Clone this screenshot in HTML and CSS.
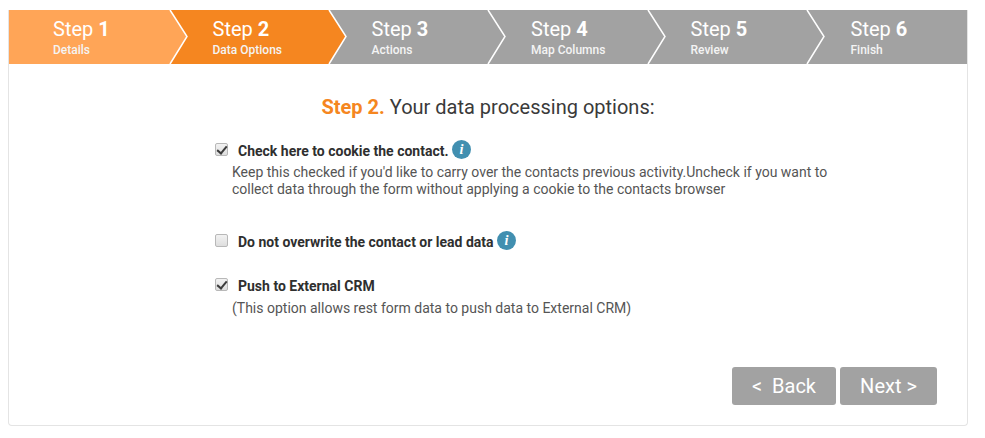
FILE: index.html
```html
<!DOCTYPE html>
<html lang="en">
<head>
<meta charset="utf-8">
<title>Step 2</title>
<link rel="stylesheet" href="styles.css">
</head>
<body>
<div class="panel">
  <ol class="steps">
    <li class="step done"><span class="step-title">Step <b>1</b></span><span class="step-sub">Details</span>
      <svg class="chev" viewBox="0 0 18 54"><polygon class="chev-fill" points="0,0 17,26.500 0,54"/><polyline class="chev-line" points="0,0 17,26.500 0,54"/></svg></li>
    <li class="step active"><span class="step-title">Step <b>2</b></span><span class="step-sub">Data Options</span>
      <svg class="chev" viewBox="0 0 18 54"><polygon class="chev-fill" points="0,0 17,26.500 0,54"/><polyline class="chev-line" points="0,0 17,26.500 0,54"/></svg></li>
    <li class="step"><span class="step-title">Step <b>3</b></span><span class="step-sub">Actions</span>
      <svg class="chev" viewBox="0 0 18 54"><polygon class="chev-fill" points="0,0 17,26.500 0,54"/><polyline class="chev-line" points="0,0 17,26.500 0,54"/></svg></li>
    <li class="step"><span class="step-title">Step <b>4</b></span><span class="step-sub">Map Columns</span>
      <svg class="chev" viewBox="0 0 18 54"><polygon class="chev-fill" points="0,0 17,26.500 0,54"/><polyline class="chev-line" points="0,0 17,26.500 0,54"/></svg></li>
    <li class="step"><span class="step-title">Step <b>5</b></span><span class="step-sub">Review</span>
      <svg class="chev" viewBox="0 0 18 54"><polygon class="chev-fill" points="0,0 17,26.500 0,54"/><polyline class="chev-line" points="0,0 17,26.500 0,54"/></svg></li>
    <li class="step"><span class="step-title">Step <b>6</b></span><span class="step-sub">Finish</span></li>
  </ol>

  <h2 class="heading"><span class="heading-num">Step 2.</span> Your data processing options:</h2>

  <div class="options">
    <div class="option opt-first">
      <label class="opt-label"><input type="checkbox" class="check" checked><span>Check here to cookie the contact.</span>
        <svg class="info" viewBox="0 0 20 20"><circle cx="10" cy="10" r="10"/><text x="10" y="14.500">i</text></svg></label>
      <p class="opt-help">Keep this checked if you'd like to carry over the contacts previous activity.Uncheck if you want to<br>collect data through the form without applying a cookie to the contacts browser</p>
    </div>
    <div class="option opt-second">
      <label class="opt-label"><input type="checkbox" class="check"><span>Do not overwrite the contact or lead data</span>
        <svg class="info" viewBox="0 0 20 20"><circle cx="10" cy="10" r="10"/><text x="10" y="14.500">i</text></svg></label>
    </div>
    <div class="option opt-third">
      <label class="opt-label"><input type="checkbox" class="check" checked><span>Push to External CRM</span></label>
      <p class="opt-help opt-help-last">(This option allows rest form data to push data to External CRM)</p>
    </div>
  </div>

  <div class="actions">
    <button class="btn btn-back" type="button">&lt;&nbsp; Back</button>
    <button class="btn btn-next" type="button">Next &gt;</button>
  </div>
</div>
</body>
</html>
```

FILE: styles.css
```css
* { box-sizing: border-box; }
html, body { margin: 0; padding: 0; background: #fff; }
body {
  width: 985px;
  height: 438px;
  padding: 10px 17px 0 8px;
  overflow: hidden;
  font-family: Roboto, "Liberation Sans", sans-serif;
}
.panel {
  width: 960px;
  height: 416px;
  border: 1px solid #e4e4e4;
  border-top: 0;
  border-radius: 0 0 4px 4px;
  display: flex;
  flex-direction: column;
}
.steps {
  list-style: none;
  margin: 0;
  padding: 0;
  height: 54px;
  display: flex;
  flex: none;
}
.step {
  position: relative;
  flex: 1 1 0;
  background: #a2a2a2;
  color: #fff;
  padding: 7px 0 0 43px;
  display: flex;
  flex-direction: column;
}
.step:nth-child(1) { z-index: 6; padding-left: 44px; }
.step:nth-child(2) { z-index: 5; }
.step:nth-child(3) { z-index: 4; padding-left: 42.500px; }
.step:nth-child(4) { z-index: 3; }
.step:nth-child(5) { z-index: 2; }
.step:nth-child(6) { z-index: 1; padding-left: 43.500px; }
.step.done { background: #ffa557; }
.step.active { background: #f58620; }
.step-title {
  font-size: 20px;
  line-height: 24px;
  font-weight: 400;
}
.step-title b { font-weight: 700; }
.step-sub {
  font-size: 12px;
  line-height: 16px;
  margin-top: 1px;
  font-weight: 500;
  color: #f4f4f4;
}
.chev {
  position: absolute;
  left: 100%;
  top: 0;
  width: 18px;
  height: 54px;
  overflow: visible;
}
.chev-fill { fill: #a2a2a2; }
.done .chev-fill { fill: #ffa557; }
.active .chev-fill { fill: #f58620; }
.chev-line { fill: none; stroke: #fff; stroke-width: 1.500; }
.heading {
  margin: 30px 0 0;
  text-align: center;
  font-size: 20px;
  line-height: 26px;
  font-weight: 400;
  color: #3a3a3a;
}
.heading-num { color: #f58620; font-weight: 700; }
.options { padding-left: 206px; width: 840px; }
.option { position: relative; }
.opt-first { margin-top: 20px; }
.opt-second { margin-top: 33px; }
.opt-third { margin-top: 22px; }
.opt-label {
  display: flex;
  align-items: center;
  height: 22px;
  font-size: 14px;
  font-weight: 700;
  color: #2f2f2f;
}
.check {
  appearance: none;
  position: relative;
  width: 13px;
  height: 13px;
  margin: 0 10px 4px 0;
  flex: none;
  border: 1px solid #b8b8b8;
  border-radius: 2px;
  background: linear-gradient(#f2f2f2, #dedede);
}
.check:checked::after {
  content: "";
  position: absolute;
  left: 3px;
  top: 0;
  width: 4px;
  height: 8px;
  border: solid #3c3c3c;
  border-width: 0 2px 2px 0;
  transform: rotate(40deg);
}
.info {
  width: 19px;
  height: 19px;
  margin: 0 0 3px 3px;
  flex: none;
}
.info circle { fill: #418fb0; }
.info text {
  fill: #fff;
  font-family: "Liberation Serif", serif;
  font-size: 15px;
  font-weight: 700;
  font-style: italic;
  text-anchor: middle;
}
.opt-help {
  margin: 2px 0 0 17px;
  font-size: 14px;
  line-height: 17px;
  color: #555;
}
.opt-help-last { margin-top: 3px; }
.actions {
  margin-top: auto;
  padding: 0 30px 20px 0;
  display: flex;
  justify-content: flex-end;
  gap: 4px;
}
.btn {
  height: 38px;
  border: 0;
  border-radius: 3px;
  background: #a2a2a2;
  color: #fff;
  font-family: Roboto, "Liberation Sans", sans-serif;
  font-size: 20px;
  font-weight: 400;
  padding: 0;
}
.btn-back { width: 104px; }
.btn-next { width: 97px; }
```
